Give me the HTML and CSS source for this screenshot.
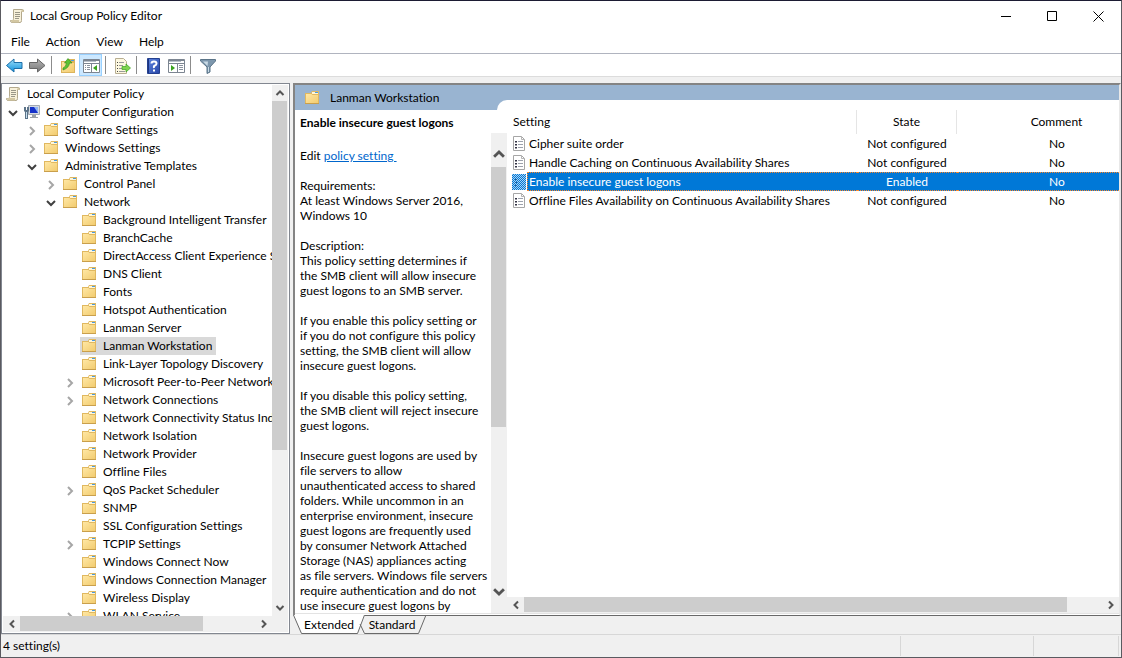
FILE: index.html
```html
<!DOCTYPE html>
<html lang="en">
<head>
    <meta charset="UTF-8">
    <meta name="viewport" content="width=device-width, initial-scale=1.0">
    <title>Local Group Policy Editor</title>
    <link rel="stylesheet" href="styles.css">
</head>
<body>

  <!-- Shared icons -->
  <svg class="sprite" xmlns="http://www.w3.org/2000/svg">
    <linearGradient id="gold" x1="0" y1="0" x2="1" y2="1">
      <stop offset="0" stop-color="#ffe7a4"/>
      <stop offset="1" stop-color="#f2cc70"/>
    </linearGradient>
    <linearGradient id="blue" x1="0" y1="0" x2="0" y2="1">
      <stop offset="0" stop-color="#9fe0fa"/>
      <stop offset="1" stop-color="#0b8fdc"/>
    </linearGradient>
    <linearGradient id="grey" x1="0" y1="0" x2="0" y2="1">
      <stop offset="0" stop-color="#b5b5b5"/>
      <stop offset="1" stop-color="#777"/>
    </linearGradient>
    <linearGradient id="help" x1="0" y1="0" x2="1" y2="1">
      <stop offset="0" stop-color="#5f86e0"/>
      <stop offset="1" stop-color="#2746a8"/>
    </linearGradient>
    <symbol id="folder" viewBox="0 0 16 16">
      <path fill="#e0b860" d="M1 3h6l1-2h7v13H1z"/>
      <path fill="#fff6d8" d="M8 2h6v2H8z"/>
      <path fill="#4a9be0" d="M11 2h3v1h-3z"/>
      <path fill="url(#gold)" d="M2 4h5.500l1 1H14v8H2z"/>
      <path fill="#c99f4c" d="M1 13h14v1H1z"/>
    </symbol>
    <symbol id="scroll" viewBox="0 0 16 16">
      <path fill="#f8f1da" stroke="#b3a98d" d="M4.500 1.500h9q1.500 0 1 2h-2v9q0 2-1.500 2h-8q-1.500 0-1.500-2h2q1-.5 1-2z"/>
      <path fill="#d3c7a2" d="M2 12h8v2.500H3zM12.500 2h2v2h-2z"/>
      <path stroke="#9a9788" d="M6 4.500h5M6 6.500h5M6 8.500h5M6 10.500h4"/>
    </symbol>
    <symbol id="computer" viewBox="0 0 16 16">
      <path fill="#d6dae0" stroke="#a3aab4" d="M4.500 1.500h11v9h-11z"/>
      <path fill="#1531c9" d="M6 3h8v6H6z"/>
      <path fill="#8fb4f5" d="M10 3h4v6z"/>
      <path fill="#9ba1a8" d="M8 11h4v2H8zM6 13h8v1H6z"/>
      <path fill="#5c7489" d="M0 3h2v3h1V3h2v4L4 8v7H1V8L0 7z"/>
      <path fill="#c9e0ef" d="M2 8h1v6H2z"/>
    </symbol>
    <symbol id="doc" viewBox="0 0 14 16">
      <path fill="#fff" stroke="#a6a6a6" d="M1.500.5h8l3 3v11h-11z"/>
      <path fill="none" stroke="#b5b5b5" d="M9.500.5v3h3"/>
      <path fill="#334" d="M3 5h2v1.500H3zM3 8h2v1.500H3zM3 11h2v1.500H3z"/>
      <path stroke="#9da2ad" d="M6 5.500h5M6 8.500h5M6 11.500h5"/>
    </symbol>
    <symbol id="doc-picked" viewBox="0 0 14 16">
      <path fill="#0078d7" d="M0 0h14v16H0z"/>
      <path stroke="#a8d2f2" stroke-dasharray="1 1" d="M0 .5h14M0 2.500h14M0 4.500h14M0 6.500h14M0 8.500h14M0 10.500h14M0 12.500h14M0 14.500h14"/>
      <path stroke="#a8d2f2" stroke-dasharray="1 1" d="M1 1.500h13M1 3.500h13M1 5.500h13M1 7.500h13M1 9.500h13M1 11.500h13M1 13.500h13M1 15.500h13"/>
      <path fill="#1a5f9e" d="M3 5h2v1H3zM3 8h2v1H3zM3 11h2v1H3z"/>
    </symbol>
    <symbol id="open" viewBox="0 0 10 10">
      <path fill="none" stroke="#404040" stroke-width="2" d="M1 3l4 4 4-4"/>
    </symbol>
    <symbol id="closed" viewBox="0 0 10 10">
      <path fill="none" stroke="#a6a6a6" stroke-width="2" d="M3 1l4 4-4 4"/>
    </symbol>
    <symbol id="up" viewBox="0 0 10 10">
      <path fill="none" stroke="#555" stroke-width="2" d="M1.500 7L5 3.500 8.500 7"/>
    </symbol>
    <symbol id="down" viewBox="0 0 10 10">
      <path fill="none" stroke="#555" stroke-width="2" d="M1.500 3L5 6.500 8.500 3"/>
    </symbol>
    <symbol id="left" viewBox="0 0 10 10">
      <path fill="none" stroke="#555" stroke-width="2" d="M7 1.500L3.500 5 7 8.500"/>
    </symbol>
    <symbol id="right" viewBox="0 0 10 10">
      <path fill="none" stroke="#555" stroke-width="2" d="M3 1.500L6.500 5 3 8.500"/>
    </symbol>
  </svg>

  <div class="window">
    <header class="title-bar">
      <svg class="icon"><use href="#scroll"/></svg>
      <h1 class="title">Local Group Policy Editor</h1>
      <button class="window-btn" aria-label="Minimize"><svg viewBox="0 0 11 11"><path d="M0 5.500h10"/></svg></button>
      <button class="window-btn" aria-label="Maximize"><svg viewBox="0 0 11 11"><path d="M.5.5h9v9h-9z"/></svg></button>
      <button class="window-btn" aria-label="Close"><svg viewBox="0 0 11 11"><path d="M.5.5l10 10M10.500.5l-10 10"/></svg></button>
    </header>

    <nav class="menu-bar">
      <button>File</button>
      <button>Action</button>
      <button>View</button>
      <button>Help</button>
    </nav>

    <div class="toolbar">
      <button aria-label="Back">
        <svg viewBox="0 0 17 16"><path fill="url(#blue)" stroke="#1c6ea8" stroke-linejoin="round" d="M.5 7.500L8 1v3.500h8v6H8V14z"/></svg>
      </button>
      <button aria-label="Forward">
        <svg viewBox="0 0 17 16"><path fill="url(#grey)" stroke="#666" stroke-linejoin="round" d="M16 7.500L8.500 1v3.500h-8v6h8V14z"/></svg>
      </button>
      <span class="divider"></span>
      <button aria-label="Up one level">
        <svg viewBox="0 0 17 16">
          <path fill="#dcb45c" d="M1 3h6l1-2h7v14H1z"/>
          <path fill="url(#gold)" d="M2 4h6l1 1h5v9H2z"/>
          <path fill="#4a9be0" d="M11 2h3v1h-3z"/>
          <path fill="#5cc234" stroke="#2c8a15" stroke-width=".6" d="M3 10q3-1 3.500-5H4.500L8 .5 12 5H9.500Q9 10 3 12z"/>
        </svg>
      </button>
      <button class="pressed" aria-label="Show or hide console tree">
        <svg viewBox="0 0 17 16">
          <path fill="#fff" stroke="#7c8591" d="M.5 1.500h16v13H.5z"/>
          <path fill="#7c8591" d="M1 2h15v1H1zM1 5h15v1H1zM8 6h1v8H8z"/>
          <path fill="#b8c0ca" d="M1 3h12v1H1z"/>
          <path stroke="#8a929e" d="M2 7.500h1M4 7.500h3M2 9.500h1M4 9.500h3M2 11.500h1M4 11.500h3"/>
          <path fill="#3aa31d" d="M14 7v6l-4-3z"/>
        </svg>
      </button>
      <span class="divider"></span>
      <button aria-label="Export list">
        <svg viewBox="0 0 17 16">
          <path fill="#fdf8e0" stroke="#b8ae92" d="M1.500.5h8l3 3v12h-11z"/>
          <path fill="#444" d="M3 4h1v1H3zM3 7h1v1H3zM3 10h1v1H3zM3 13h1v1H3z"/>
          <path stroke="#9a9a9a" d="M5 4.500h5M5 7.500h4M5 10.500h3M5 13.500h6"/>
          <path fill="#7fd44f" stroke="#3ea321" stroke-width=".7" d="M8 8.500h4V6l4.500 4-4.500 4v-2.500H8z"/>
        </svg>
      </button>
      <span class="divider"></span>
      <button aria-label="Help">
        <svg viewBox="0 0 17 16">
          <path fill="url(#help)" stroke="#24408f" d="M2.500.5h12v15h-12z"/>
          <path fill="#1d3580" d="M3 1h1v14H3z"/>
          <path fill="none" stroke="#fff" stroke-width="2" d="M6.500 5.500q0-2 2.500-2t2.500 2q0 1.500-1.500 2T9 10M9 11.500v2"/>
        </svg>
      </button>
      <button aria-label="Show or hide action pane">
        <svg viewBox="0 0 17 16">
          <path fill="#fff" stroke="#7c8591" d="M.5 1.500h16v13H.5z"/>
          <path fill="#7c8591" d="M1 2h15v1H1zM1 5h15v1H1zM9 6h1v8H9z"/>
          <path fill="#b8c0ca" d="M1 3h12v1H1z"/>
          <path stroke="#8a929e" d="M11 7.500h4M11 9.500h4M11 11.500h4"/>
          <path fill="#3aa31d" d="M3 7v6l4-3z"/>
        </svg>
      </button>
      <span class="divider"></span>
      <button aria-label="Filter">
        <svg viewBox="0 0 17 16">
          <path fill="#7d97ad" stroke="#5b7488" stroke-linejoin="round" d="M1.500 1.500h15V3L11 9v5l-3 1.500V9L1.500 3z"/>
          <path fill="#c9dae6" d="M4 3.500h5L8.500 8zM9 9h1v5H9z"/>
        </svg>
      </button>
    </div>

    <main class="content">
      <section class="tree-pane">
        <div class="tree-view">
          <ul class="tree">
            <li><div class="node"><button class="label"><svg class="icon"><use href="#scroll"/></svg>Local Computer Policy</button></div>
              <ul>
                <li><div class="node"><button class="toggle" aria-label="Collapse"><svg><use href="#open"/></svg></button><button class="label"><svg class="icon"><use href="#computer"/></svg>Computer Configuration</button></div>
                  <ul>
                    <li><div class="node"><button class="toggle" aria-label="Expand"><svg><use href="#closed"/></svg></button><button class="label"><svg class="icon"><use href="#folder"/></svg>Software Settings</button></div></li>
                    <li><div class="node"><button class="toggle" aria-label="Expand"><svg><use href="#closed"/></svg></button><button class="label"><svg class="icon"><use href="#folder"/></svg>Windows Settings</button></div></li>
                    <li><div class="node"><button class="toggle" aria-label="Collapse"><svg><use href="#open"/></svg></button><button class="label"><svg class="icon"><use href="#folder"/></svg>Administrative Templates</button></div>
                      <ul>
                        <li><div class="node"><button class="toggle" aria-label="Expand"><svg><use href="#closed"/></svg></button><button class="label"><svg class="icon"><use href="#folder"/></svg>Control Panel</button></div></li>
                        <li><div class="node"><button class="toggle" aria-label="Collapse"><svg><use href="#open"/></svg></button><button class="label"><svg class="icon"><use href="#folder"/></svg>Network</button></div>
                          <ul>
                            <li><div class="node"><button class="label"><svg class="icon"><use href="#folder"/></svg>Background Intelligent Transfer</button></div></li>
                            <li><div class="node"><button class="label"><svg class="icon"><use href="#folder"/></svg>BranchCache</button></div></li>
                            <li><div class="node"><button class="label"><svg class="icon"><use href="#folder"/></svg>DirectAccess Client Experience S</button></div></li>
                            <li><div class="node"><button class="label"><svg class="icon"><use href="#folder"/></svg>DNS Client</button></div></li>
                            <li><div class="node"><button class="label"><svg class="icon"><use href="#folder"/></svg>Fonts</button></div></li>
                            <li><div class="node"><button class="label"><svg class="icon"><use href="#folder"/></svg>Hotspot Authentication</button></div></li>
                            <li><div class="node"><button class="label"><svg class="icon"><use href="#folder"/></svg>Lanman Server</button></div></li>
                            <li><div class="node"><button class="label current"><svg class="icon"><use href="#folder"/></svg>Lanman Workstation</button></div></li>
                            <li><div class="node"><button class="label"><svg class="icon"><use href="#folder"/></svg>Link-Layer Topology Discovery</button></div></li>
                            <li><div class="node"><button class="toggle" aria-label="Expand"><svg><use href="#closed"/></svg></button><button class="label"><svg class="icon"><use href="#folder"/></svg>Microsoft Peer-to-Peer Network</button></div></li>
                            <li><div class="node"><button class="toggle" aria-label="Expand"><svg><use href="#closed"/></svg></button><button class="label"><svg class="icon"><use href="#folder"/></svg>Network Connections</button></div></li>
                            <li><div class="node"><button class="label"><svg class="icon"><use href="#folder"/></svg>Network Connectivity Status Ind</button></div></li>
                            <li><div class="node"><button class="label"><svg class="icon"><use href="#folder"/></svg>Network Isolation</button></div></li>
                            <li><div class="node"><button class="label"><svg class="icon"><use href="#folder"/></svg>Network Provider</button></div></li>
                            <li><div class="node"><button class="label"><svg class="icon"><use href="#folder"/></svg>Offline Files</button></div></li>
                            <li><div class="node"><button class="toggle" aria-label="Expand"><svg><use href="#closed"/></svg></button><button class="label"><svg class="icon"><use href="#folder"/></svg>QoS Packet Scheduler</button></div></li>
                            <li><div class="node"><button class="label"><svg class="icon"><use href="#folder"/></svg>SNMP</button></div></li>
                            <li><div class="node"><button class="label"><svg class="icon"><use href="#folder"/></svg>SSL Configuration Settings</button></div></li>
                            <li><div class="node"><button class="toggle" aria-label="Expand"><svg><use href="#closed"/></svg></button><button class="label"><svg class="icon"><use href="#folder"/></svg>TCPIP Settings</button></div></li>
                            <li><div class="node"><button class="label"><svg class="icon"><use href="#folder"/></svg>Windows Connect Now</button></div></li>
                            <li><div class="node"><button class="label"><svg class="icon"><use href="#folder"/></svg>Windows Connection Manager</button></div></li>
                            <li><div class="node"><button class="label"><svg class="icon"><use href="#folder"/></svg>Wireless Display</button></div></li>
                            <li><div class="node"><button class="toggle" aria-label="Expand"><svg><use href="#closed"/></svg></button><button class="label"><svg class="icon"><use href="#folder"/></svg>WLAN Service</button></div></li>
                          </ul>
                        </li>
                      </ul>
                    </li>
                  </ul>
                </li>
              </ul>
            </li>
          </ul>
          <div class="scrollbar vertical">
            <button aria-label="Scroll up"><svg><use href="#up"/></svg></button>
            <div class="track"><div class="thumb tree-thumb-y"></div></div>
            <button aria-label="Scroll down"><svg><use href="#down"/></svg></button>
          </div>
        </div>
        <div class="scrollbar horizontal with-corner">
          <button aria-label="Scroll left"><svg><use href="#left"/></svg></button>
          <div class="track"><div class="thumb tree-thumb-x"></div></div>
          <button aria-label="Scroll right"><svg><use href="#right"/></svg></button>
        </div>
      </section>

      <section class="result-pane">
        <div class="result-frame">
          <div class="result-header">
            <h2 class="result-title"><svg class="icon"><use href="#folder"/></svg>Lanman Workstation</h2>
            <div class="sheet-edge"></div>
          </div>
          <div class="result-body">
            <div class="details">
              <h3 class="policy-name">Enable insecure guest logons</h3>
              <div class="details-view">
                <div class="description">
                  <p>Edit <a href="#">policy setting&nbsp;</a></p>
                  <p>Requirements:<br>At least Windows Server 2016,<br>Windows 10</p>
                  <p>Description:<br>This policy setting determines if<br>the SMB client will allow insecure<br>guest logons to an SMB server.</p>
                  <p>If you enable this policy setting or<br>if you do not configure this policy<br>setting, the SMB client will allow<br>insecure guest logons.</p>
                  <p>If you disable this policy setting,<br>the SMB client will reject insecure<br>guest logons.</p>
                  <p>Insecure guest logons are used by<br>file servers to allow<br>unauthenticated access to shared<br>folders. While uncommon in an<br>enterprise environment, insecure<br>guest logons are frequently used<br>by consumer Network Attached<br>Storage (NAS) appliances acting<br>as file servers. Windows file servers<br>require authentication and do not<br>use insecure guest logons by</p>
                </div>
                <div class="scrollbar vertical large">
                  <button aria-label="Scroll up"><svg><use href="#up"/></svg></button>
                  <div class="track"><div class="thumb details-thumb"></div></div>
                  <button aria-label="Scroll down"><svg><use href="#down"/></svg></button>
                </div>
              </div>
            </div>

            <div class="list">
              <div class="list-view">
                <table class="settings">
                  <thead>
                    <tr><th>Setting</th><th class="state">State</th><th class="comment">Comment</th></tr>
                  </thead>
                  <tbody>
                    <tr><td><span class="setting"><svg class="doc"><use href="#doc"/></svg><span class="name">Cipher suite order</span></span></td><td>Not configured</td><td>No</td></tr>
                    <tr><td><span class="setting"><svg class="doc"><use href="#doc"/></svg><span class="name">Handle Caching on Continuous Availability Shares</span></span></td><td>Not configured</td><td>No</td></tr>
                    <tr class="selected"><td><span class="setting"><svg class="doc"><use href="#doc-picked"/></svg><span class="name">Enable insecure guest logons</span></span></td><td>Enabled</td><td>No</td></tr>
                    <tr><td><span class="setting"><svg class="doc"><use href="#doc"/></svg><span class="name">Offline Files Availability on Continuous Availability Shares</span></span></td><td>Not configured</td><td>No</td></tr>
                  </tbody>
                </table>
              </div>
              <div class="scrollbar horizontal">
                <button aria-label="Scroll left"><svg><use href="#left"/></svg></button>
                <div class="track"><div class="thumb list-thumb"></div></div>
                <button aria-label="Scroll right"><svg><use href="#right"/></svg></button>
              </div>
            </div>
          </div>
        </div>

        <div class="tabs">
          <button class="tab active"><svg class="tab-shape" viewBox="0 0 72 18"><path fill="#fff" d="M0-1h72l-7 18H9z"/><path fill="none" stroke="#696969" d="M.5-1l8 18.500h56L71.500-1"/></svg><span>Extended</span></button>
          <button class="tab"><svg class="tab-shape" viewBox="0 0 72 18"><path fill="none" stroke="#696969" d="M4 8l4.500 9.500h54L70-1"/></svg><span>Standard</span></button>
        </div>
      </section>
    </main>

    <footer class="status-bar">
      <span class="status-text">4 setting(s)</span>
      <span class="status-cell wide"></span>
      <span class="status-cell last"></span>
    </footer>
  </div>

</body>
</html>
```
FILE: styles.css
```css
* {
  box-sizing: border-box;
}

body {
  margin: 0;
  font: 12px/18px Lato, "Open Sans", sans-serif;
  font-variant-ligatures: none;
  color: #000;
}

button {
  margin: 0;
  padding: 0;
  border: none;
  background: none;
  font: inherit;
  font-variant-ligatures: none;
  color: inherit;
}

h1,
h2,
h3,
p,
ul {
  margin: 0;
  padding: 0;
  font-size: 12px;
  font-weight: normal;
}

ul {
  list-style: none;
}

.sprite {
  position: absolute;
  width: 0;
  height: 0;
}

.icon {
  width: 16px;
  height: 16px;
  flex: none;
}

.window {
  height: 100vh;
  display: flex;
  flex-direction: column;
  border: 1px solid #5a5a60;
  border-top-color: #1c1b33;
  background: #f0f0f0;
  overflow: hidden;
}

/* Title, menu and toolbar */
.title-bar {
  height: 30px;
  display: flex;
  align-items: center;
  padding-left: 8px;
  background: #fff;
}

.title {
  flex: 1;
  padding-left: 5px;
}

.window-btn {
  width: 46px;
  height: 30px;
  display: flex;
  align-items: center;
  justify-content: center;
}

.window-btn svg {
  width: 11px;
  height: 11px;
  fill: none;
  stroke: #000;
}

.menu-bar {
  height: 23px;
  display: flex;
  padding-left: 2px;
  border-bottom: 1px solid #b0b4bf;
  background: #fff;
}

.menu-bar button {
  padding: 0 8px;
}

.toolbar {
  height: 23px;
  display: flex;
  align-items: center;
  padding-left: 1px;
  border-bottom: 1px solid #dcdcdc;
  background: #fff;
}

.toolbar button {
  width: 23px;
  height: 22px;
  display: flex;
  align-items: center;
  justify-content: center;
  padding: 2px 0 0 1px;
}

.toolbar button svg {
  width: 17px;
  height: 16px;
}

.toolbar .pressed {
  border: 1px solid #99d1ff;
  background: #cce8ff;
}

.divider {
  width: 1px;
  height: 18px;
  margin: 0 4px 0 3px;
  background: #8c8c8c;
}

.content {
  flex: 1;
  min-height: 0;
  display: flex;
  gap: 3px;
  padding-top: 6px;
}

/* Scrollbars */
.scrollbar {
  display: flex;
  flex: none;
  background: #f0f0f0;
}

.scrollbar button {
  display: flex;
  flex: none;
  align-items: center;
  justify-content: center;
  width: 16px;
  height: 16px;
}

.scrollbar svg {
  width: 10px;
  height: 10px;
}

.vertical {
  flex-direction: column;
  width: 16px;
}

.horizontal {
  height: 16px;
}

.horizontal button {
  width: 17px;
}

.with-corner {
  padding-right: 16px;
}

.large button {
  height: 34px;
  padding: 6px 0;
}

.large button:first-child {
  align-items: flex-end;
}

.large button:last-child {
  align-items: flex-start;
}

.large svg {
  width: 14px;
  height: 14px;
}

.track {
  flex: 1;
}

.thumb {
  background: #cdcdcd;
}

.vertical .thumb {
  width: 15px;
}

.horizontal .thumb {
  height: 15px;
}

.tree-thumb-y {
  height: 70%;
}

.tree-thumb-x {
  width: 78%;
}

.details-thumb {
  height: 63%;
}

.list-thumb {
  width: 94%;
}

/* Console tree */
.tree-pane {
  width: 289px;
  flex: none;
  display: flex;
  flex-direction: column;
  border: 1px solid #828790;
  background: #fff;
  padding: 1px;
}

.tree-view {
  flex: 1;
  min-height: 0;
  display: flex;
}

.tree {
  flex: 1;
  min-width: 0;
  padding-left: 1px;
  overflow: hidden;
}

.tree ul {
  padding-left: 19px;
}

.node {
  height: 18px;
  display: flex;
  position: relative;
}

.toggle {
  position: absolute;
  left: -20px;
  top: 4px;
  width: 20px;
  height: 12px;
  display: flex;
  align-items: center;
  justify-content: center;
}

.toggle svg {
  width: 10px;
  height: 10px;
}

.label {
  display: flex;
  align-items: center;
  gap: 6px;
  padding: 0 4px 0 1px;
  white-space: nowrap;
}

.current {
  background: #d9d9d9;
}

/* Result pane */
.result-pane {
  flex: 1;
  min-width: 0;
  display: flex;
  flex-direction: column;
}

.result-frame {
  flex: 1;
  min-height: 0;
  display: flex;
  flex-direction: column;
  padding-bottom: 1px;
  border: 2px solid #696969;
  border-top-color: #848484;
  border-left-color: #848484;
  border-right-color: #e8e8e8;
  border-bottom-width: 1px;
  background: #fff;
}

.result-header {
  height: 25px;
  display: flex;
  align-items: flex-end;
  flex: none;
  background: #99b4d1;
}

.result-title {
  width: 202px;
  height: 25px;
  display: flex;
  align-items: center;
  gap: 10px;
  padding-left: 9px;
}

.sheet-edge {
  flex: 1;
  height: 10px;
  border-top-left-radius: 10px;
  background: #fff;
}

.result-body {
  flex: 1;
  min-height: 0;
  display: flex;
  border-bottom: 1px solid #e3e3e3;
}

.details {
  width: 212px;
  flex: none;
  display: flex;
  flex-direction: column;
}

.policy-name {
  height: 23px;
  padding: 4px 5px;
  font-weight: bold;
}

.details-view {
  flex: 1;
  min-height: 0;
  display: flex;
}

.description {
  flex: 1;
  padding: 15px 0 0 5px;
  line-height: 15px;
  white-space: nowrap;
  overflow: hidden;
}

.description p {
  margin-bottom: 15px;
}

.description a {
  color: #0066cc;
}

.list {
  flex: 1;
  min-width: 0;
  display: flex;
  flex-direction: column;
}

.list-view {
  flex: 1;
  overflow: hidden;
}

.settings {
  width: 100%;
  min-width: 650px;
  table-layout: fixed;
  border-collapse: separate;
  border-spacing: 0;
  line-height: 19px;
}

.settings th {
  height: 24px;
  padding: 0 6px 2px;
  border-right: 1px solid #e5e5e5;
  font-weight: normal;
  text-align: left;
}

.settings .state {
  width: 100px;
  text-align: center;
}

.settings .comment {
  width: 200px;
  text-align: center;
}

.settings td {
  height: 19px;
  padding: 0;
  text-align: center;
}

.setting {
  height: 19px;
  display: flex;
  align-items: center;
  padding-left: 5px;
}

.doc {
  width: 14px;
  height: 16px;
  flex: none;
}

.name {
  flex: 1;
  height: 19px;
  margin-left: 1px;
  padding-left: 2px;
  text-align: left;
  white-space: nowrap;
}

.selected .name,
.selected td + td {
  background: #0078d7;
  color: #fff;
  border: 1px dotted #ff8728;
  border-width: 1px 0;
  line-height: 17px;
}

.selected .name {
  border-left-width: 1px;
  padding-left: 1px;
}

/* Extended and Standard tabs */
.tabs {
  height: 18px;
  display: flex;
}

.tab {
  position: relative;
  width: 72px;
  height: 18px;
}

.tab + .tab {
  margin-left: -9px;
}

.tab span {
  position: relative;
}

.tab-shape {
  position: absolute;
  left: 0;
  top: 0;
  width: 72px;
  height: 18px;
  overflow: visible;
}

/* Status bar */
.status-bar {
  height: 23px;
  display: flex;
  align-items: center;
  padding-right: 2px;
  border-top: 1px solid #d7d7d7;
}

.status-text {
  flex: 1;
  padding-left: 2px;
}

.status-cell {
  width: 86px;
  height: 20px;
  border-left: 1px solid #d7d7d7;
}

.wide {
  width: 133px;
}

.last {
  border-right: 1px solid #d7d7d7;
}
```
